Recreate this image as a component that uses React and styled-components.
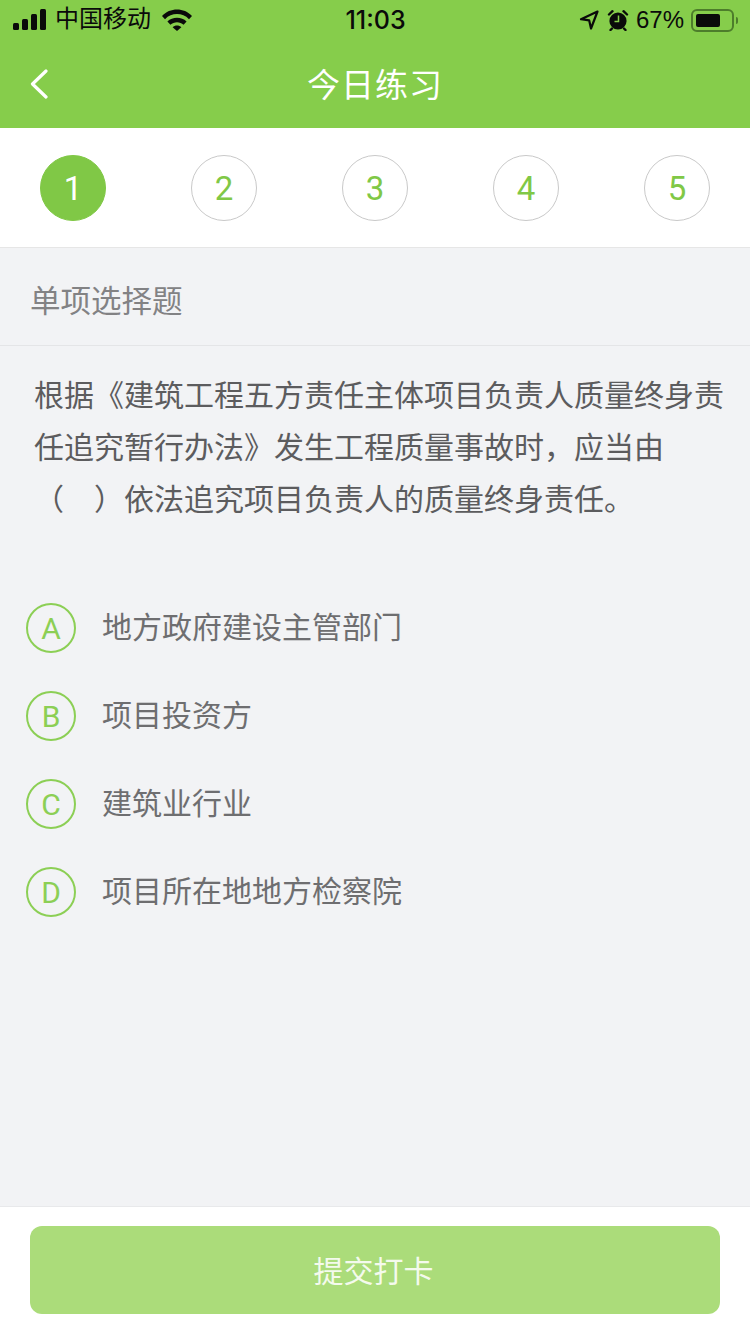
import styled, { createGlobalStyle } from "styled-components";

const GlobalStyle = createGlobalStyle`
  html, body { margin: 0; padding: 0; }
  body { background: #f2f3f5; font-family: "Liberation Sans", "Noto Sans CJK SC", sans-serif; }
`;

const steps = [1, 2, 3, 4, 5];
const options = [
  { key: "A", text: "地方政府建设主管部门" },
  { key: "B", text: "项目投资方" },
  { key: "C", text: "建筑业行业" },
  { key: "D", text: "项目所在地地方检察院" },
];

const App = () => {
  return (
    <Page>
      <GlobalStyle />
      <Header>
        <StatusBar>
          <StatusLeft>
            <svg width="34" height="22" viewBox="0 0 34 22">
              <rect x="0" y="14" width="6" height="7" rx="1.5" fill="#0a0a0a" />
              <rect x="9" y="10" width="6" height="11" rx="1.5" fill="#0a0a0a" />
              <rect x="18" y="5" width="6" height="16" rx="1.5" fill="#0a0a0a" />
              <rect x="27" y="0" width="6" height="21" rx="1.5" fill="#0a0a0a" />
            </svg>
            <Carrier>中国移动</Carrier>
            <svg width="30" height="22" viewBox="0 0 30 22">
              <path d="M0 7C8 -1.6 22 -1.6 30 7L27 10.2C20.5 3.4 9.5 3.4 3 10.2Z" fill="#0a0a0a" />
              <path d="M5.4 12.6C10.5 7.6 19.5 7.6 24.6 12.6L21.6 15.8C18 12.3 12 12.3 8.4 15.8Z" fill="#0a0a0a" />
              <path d="M10.6 18.2C13 15.9 17 15.9 19.4 18.2L15 22Z" fill="#0a0a0a" />
            </svg>
          </StatusLeft>
          <Clock>11:03</Clock>
          <StatusRight>
            <svg width="20" height="20" viewBox="0 0 20 20">
              <path d="M18.5 1.5L2 9.2L10.2 10.4L12 18.5Z" fill="none" stroke="#0a0a0a" strokeWidth="2.2" strokeLinejoin="round" />
            </svg>
            <svg width="22" height="22" viewBox="0 0 22 22">
              <circle cx="11" cy="12" r="8.6" fill="#0a0a0a" />
              <path d="M2 5.5L5.5 2.2M20 5.5L16.5 2.2M5 19.5L3.5 21M17 19.5L18.5 21" stroke="#0a0a0a" strokeWidth="2.4" strokeLinecap="round" />
              <path d="M11.5 6.5V12.5H7.5" fill="none" stroke="#86cd4b" strokeWidth="1.5" />
            </svg>
            <Percent>67%</Percent>
            <Battery>
              <BatteryFill />
            </Battery>
            <BatteryCap />
          </StatusRight>
        </StatusBar>
        <NavBar>
          <BackIcon width="20" height="30" viewBox="0 0 20 30">
            <path d="M17 2L3.5 15L17 28" fill="none" stroke="#fff" strokeWidth="3.2" strokeLinecap="round" strokeLinejoin="round" />
          </BackIcon>
          <Title>今日练习</Title>
        </NavBar>
      </Header>

      <StepRow>
        {steps.map((step) => (
          <Step key={step} $active={step === 1}>{step}</Step>
        ))}
      </StepRow>

      <TypeRow>单项选择题</TypeRow>

      <Question>
        根据《建筑工程五方责任主体项目负责人质量终身责任追究暂行办法》发生工程质量事故时，应当由（　）依法追究项目负责人的质量终身责任。
      </Question>

      <OptionList>
        {options.map((option) => (
          <Option key={option.key}>
            <OptionBadge>{option.key}</OptionBadge>
            <OptionText>{option.text}</OptionText>
          </Option>
        ))}
      </OptionList>

      <Footer>
        <SubmitButton>提交打卡</SubmitButton>
      </Footer>
    </Page>
  );
};

const Page = styled.div`
  width: 750px;
  height: 1334px;
  display: flex;
  flex-direction: column;
  background: #f2f3f5;
  overflow: hidden;
`;
const Header = styled.div`
  height: 128px;
  background: #86cd4b;
`;
const StatusBar = styled.div`
  height: 40px;
  display: grid;
  grid-template-columns: 1fr auto 1fr;
  align-items: center;
  padding: 0 12px 0 13px;
  color: #0a0a0a;
`;
const StatusLeft = styled.div`
  display: flex;
  align-items: center;
  gap: 8px;
`;
const Carrier = styled.span`
  font-size: 24px;
  line-height: 40px;
  margin-top: -2px;
  margin-right: 3px;
`;
const Clock = styled.span`
  font-family: Inter, "Liberation Sans", sans-serif;
  font-size: 25px;
  font-weight: 500;
`;
const StatusRight = styled.div`
  display: flex;
  align-items: center;
  justify-content: flex-end;
  gap: 8px;
`;
const Percent = styled.span`
  font-size: 24px;
  margin-left: -1px;
`;
const Battery = styled.div`
  width: 43px;
  height: 23px;
  box-sizing: border-box;
  border: 2px solid #4d7d2b;
  border-radius: 6px;
  padding: 3px;
  margin-left: -1px;
`;
const BatteryFill = styled.div`
  width: 24px;
  height: 100%;
  background: #0a0a0a;
  border-radius: 2px;
`;
const BatteryCap = styled.div`
  width: 2px;
  height: 7px;
  background: #4d7d2b;
  margin-left: -6px;
  border-radius: 0 2px 2px 0;
`;
const NavBar = styled.div`
  height: 88px;
  display: flex;
  align-items: center;
  justify-content: center;
  position: relative;
`;
const BackIcon = styled.svg`
  position: absolute;
  left: 29px;
  top: 29px;
`;
const Title = styled.div`
  color: #fff;
  font-size: 33px;
  letter-spacing: 1px;
  margin-top: -2px;
`;
const StepRow = styled.div`
  height: 120px;
  box-sizing: border-box;
  background: #fff;
  border-bottom: 1px solid #e6e6e6;
  display: flex;
  justify-content: space-between;
  align-items: flex-start;
  padding: 27px 40px 0;
`;
const Step = styled.div`
  width: 66px;
  height: 66px;
  box-sizing: border-box;
  border-radius: 50%;
  border: 1px solid ${(p) => (p.$active ? "#80c846" : "#c9c9c9")};
  background: ${(p) => (p.$active ? "#80c846" : "#fff")};
  color: ${(p) => (p.$active ? "#fff" : "#80c846")};
  font-family: Roboto, "Liberation Sans", sans-serif;
  font-weight: 400;
  font-size: 33px;
  display: flex;
  align-items: center;
  justify-content: center;
`;
const TypeRow = styled.div`
  height: 98px;
  box-sizing: border-box;
  border-bottom: 1px solid #e4e5e7;
  padding: 5px 30px 0;
  display: flex;
  align-items: center;
  font-size: 30.5px;
  color: #828284;
`;
const Question = styled.div`
  box-sizing: border-box;
  padding: 24px 25px 0 34px;
  font-size: 30px;
  line-height: 52px;
  color: #5c5c5e;
  height: 238px;
`;
const OptionList = styled.div`
  display: flex;
  flex-direction: column;
  padding: 0 26px;
  flex: 1;
`;
const Option = styled.div`
  height: 88px;
  display: flex;
  align-items: center;
  gap: 26px;
`;
const OptionBadge = styled.div`
  width: 50px;
  height: 50px;
  box-sizing: border-box;
  border: 2px solid #8ccf55;
  border-radius: 50%;
  color: #8ccf55;
  font-family: Roboto, "Liberation Sans", sans-serif;
  font-weight: 400;
  font-size: 30px;
  display: flex;
  align-items: center;
  justify-content: center;
`;
const OptionText = styled.div`
  font-size: 30px;
  line-height: 40px;
  color: #6e6e70;
`;
const Footer = styled.div`
  height: 128px;
  box-sizing: border-box;
  background: #fff;
  border-top: 1px solid #e8e9eb;
  padding: 19px 30px 0;
`;
const SubmitButton = styled.div`
  height: 88px;
  padding: 0 3px 3px 0;
  box-sizing: border-box;
  border-radius: 12px;
  background: #abdc7a;
  color: #f4faed;
  font-size: 30px;
  display: flex;
  align-items: center;
  justify-content: center;
`;

export default App;
